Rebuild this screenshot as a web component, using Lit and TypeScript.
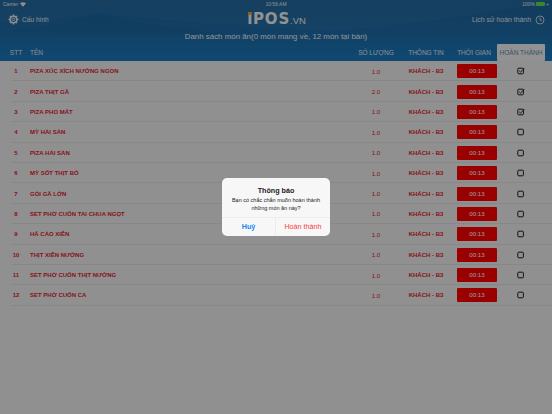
import { LitElement, css, html, svg } from "lit";
import { customElement, state } from "lit/decorators.js";

type Dish = { name: string; qty: string; done: boolean };

const dishes: Dish[] = [
    { name: "PIZA XÚC XÍCH NƯỚNG NGON", qty: "1.0", done: true },
    { name: "PIZA THỊT GÀ", qty: "2.0", done: true },
    { name: "PIZA PHO MÁT", qty: "1.0", done: true },
    { name: "MỲ HẢI SẢN", qty: "1.0", done: false },
    { name: "PIZA HẢI SẢN", qty: "1.0", done: false },
    { name: "MỲ SỐT THỊT BÒ", qty: "1.0", done: false },
    { name: "GỎI GÀ LỚN", qty: "1.0", done: false },
    { name: "SET PHỞ CUỐN TAI CHUA NGỌT", qty: "1.0", done: false },
    { name: "HÁ CẢO XIÊN", qty: "1.0", done: false },
    { name: "THỊT XIÊN NƯỚNG", qty: "1.0", done: false },
    { name: "SET PHỞ CUỐN THỊT NƯỚNG", qty: "1.0", done: false },
    { name: "SET PHỞ CUỐN CA", qty: "1.0", done: false },
];

@customElement("app-root")
export default class AppRoot extends LitElement {
    @state()
    private items: Dish[] = dishes;

    static styles = css`
        :host {
            display: block;
            width: 552px;
            height: 414px;
            position: relative;
            overflow: hidden;
            background: #f0f0f0;
            font-family: "Liberation Sans", Arial, sans-serif;
        }

        .header {
            position: relative;
            height: 61px;
            background: linear-gradient(180deg, #20649a 0%, #1e6ba6 50%, #1a7ac0 100%);
            color: #fff;
            overflow: hidden;
        }

        .waves {
            position: absolute;
            inset: 0;
        }

        .status,
        .topbar,
        .title,
        .columns {
            position: relative;
        }

        .status {
            display: grid;
            grid-template-columns: 1fr auto 1fr;
            align-items: center;
            height: 8px;
            padding: 0 3px;
            font-size: 5px;
            color: #e8eef4;
        }

        .status .left {
            display: flex;
            align-items: center;
            gap: 2px;
        }

        .status .right {
            display: flex;
            align-items: center;
            justify-content: flex-end;
            gap: 1px;
        }

        .battery {
            width: 9px;
            height: 4px;
            background: #5fe04c;
            border-radius: 1px;
        }

        .topbar {
            display: grid;
            grid-template-columns: 1fr auto 1fr;
            align-items: center;
            height: 21px;
            padding: 0 7px 0 8px;
            font-size: 6.9px;
            color: #e4ebf1;
        }

        .config {
            display: flex;
            align-items: center;
            gap: 3px;
            font-size: 6.6px;
        }

        .history {
            display: flex;
            align-items: center;
            justify-content: flex-end;
            gap: 4px;
        }

        .logo {
            position: relative;
            font-family: "DejaVu Sans", sans-serif;
            font-size: 15px;
            line-height: 21px;
            font-weight: 700;
            letter-spacing: 0.8px;
            color: #f4f4f4;
            padding-top: 1px;
        }

        .logo .dot {
            position: absolute;
            left: 1px;
            top: 4px;
            width: 4px;
            height: 3px;
            background: #f0a030;
        }

        .logo .vn {
            font-family: "Liberation Sans", sans-serif;
            font-size: 9.5px;
            font-weight: 400;
            letter-spacing: 0;
        }

        .title {
            height: 13px;
            margin-top: 1px;
            line-height: 13px;
            text-align: center;
            font-size: 7.9px;
            color: #eef2f6;
        }

        .grid {
            display: grid;
            grid-template-columns: 30px 1fr 50px 50px 46px 48px;
            align-items: center;
            padding-right: 7px;
        }

        .columns {
            height: 18px;
            font-size: 6.5px;
            color: #e4ebf1;
            text-align: center;
        }

        .columns .stt {
            margin-left: 2px;
        }

        .columns .name {
            text-align: left;
        }

        .columns .active {
            height: 17px;
            line-height: 17px;
            margin-top: 1px;
            background: #f4f4f4;
            border-radius: 1px;
            color: #5d8cae;
            white-space: nowrap;
        }

        .row {
            position: relative;
            height: 20.4px;
            font-size: 6px;
            font-weight: 700;
            color: #e2202c;
            text-align: center;
        }

        .row::after {
            content: "";
            position: absolute;
            left: 12px;
            right: 0;
            bottom: 0;
            height: 1px;
            background: #e2e2e2;
        }

        .row .name {
            text-align: left;
            white-space: nowrap;
        }

        .row .stt {
            margin-left: 2px;
            font-weight: 700;
        }

        .row .qty {
            font-weight: 400;
            font-size: 6.2px;
        }

        .time {
            justify-self: end;
            width: 40px;
            height: 14px;
            line-height: 14px;
            background: #ff0000;
            border-radius: 1px;
            color: #fff;
            font-weight: 400;
            font-size: 6.2px;
        }

        .check {
            display: flex;
            justify-content: center;
        }

        .scrim {
            position: absolute;
            inset: 0;
            z-index: 10;
            background: rgba(0, 0, 0, 0.4);
        }

        .alert {
            position: absolute;
            z-index: 11;
            left: 222px;
            top: 178px;
            width: 108px;
            height: 58px;
            background: #f7f7f7;
            border-radius: 5px;
            overflow: hidden;
            display: flex;
            flex-direction: column;
            text-align: center;
            color: #222;
        }

        .alert-body {
            flex: 1;
            padding-top: 8px;
        }

        .alert h2 {
            margin: 0 0 1px;
            font-size: 7.2px;
            line-height: 9px;
            font-weight: 700;
        }

        .alert p {
            margin: 0;
            font-size: 5.5px;
            line-height: 8px;
        }

        .actions {
            display: grid;
            grid-template-columns: 1fr 1fr;
            height: 18px;
            border-top: 1px solid #ececec;
            font-size: 7.2px;
            line-height: 17px;
        }

        .cancel {
            color: #1685f5;
            font-weight: 700;
            border-right: 1px solid #ececec;
        }

        .ok {
            color: #f9403e;
        }
    `;

    private renderCheck(done: boolean) {
        return html`<svg width="8" height="8" viewBox="0 0 8 8" fill="none" stroke="#1c1c1c" stroke-width="1">
            <rect x="0.8" y="1.2" width="5.6" height="5.6" rx="0.9"></rect>
            ${done ? svg`<path d="M2.2 3.8 L3.6 5.2 L7.4 1" stroke-width="0.9"></path>` : ""}
        </svg>`;
    }

    private renderRow(item: Dish, index: number) {
        return html`<div class="row grid">
            <div class="stt">${index + 1}</div>
            <div class="name">${item.name}</div>
            <div class="qty">${item.qty}</div>
            <div class="info">KHÁCH - B3</div>
            <div class="time">00:13</div>
            <div class="check">${this.renderCheck(item.done)}</div>
        </div>`;
    }

    render() {
        return html`
            <div class="header">
                <svg class="waves" width="552" height="61" viewBox="0 0 552 61">
                    <path d="M0 22 C40 22 70 18 100 13 C150 20 230 25 330 31 C420 24 500 12 552 0 L0 0 Z" fill="#3b83b6" opacity="0.2"></path>
                    <path d="M0 31 C40 30 70 22 100 13 C140 24 180 30 240 34 C160 36 60 36 0 31 Z" fill="#16639c" opacity="0.35"></path>
                </svg>
                <div class="status">
                    <div class="left">
                        Carrier
                        <svg width="6" height="5" viewBox="0 0 12 9"><path d="M6 9 L0 2.6 C3.4 -0.8 8.6 -0.8 12 2.6 Z" fill="#e8eef4"></path></svg>
                    </div>
                    <div>10:56 AM</div>
                    <div class="right">100% <span class="battery"></span> +</div>
                </div>
                <div class="topbar">
                    <div class="config">
                        <svg width="11" height="11" viewBox="0 0 20 20" fill="none" stroke="#e4ebf1">
                            <circle cx="10" cy="10" r="6" stroke-width="2.8"></circle>
                            <circle cx="10" cy="10" r="2.2" stroke-width="1.6"></circle>
                            <path d="M10 1 V4 M10 16 V19 M1 10 H4 M16 10 H19 M3.6 3.6 L5.8 5.8 M14.2 14.2 L16.4 16.4 M3.6 16.4 L5.8 14.2 M14.2 5.8 L16.4 3.6" stroke-width="2.8"></path>
                        </svg>
                        Cấu hình
                    </div>
                    <div class="logo"><span class="dot"></span>ıPOS<span class="vn">.VN</span></div>
                    <div class="history">
                        Lịch sử hoàn thành
                        <svg width="10" height="10" viewBox="0 0 20 20" fill="none" stroke="#e4ebf1" stroke-width="1.6">
                            <circle cx="10" cy="10" r="8"></circle>
                            <path d="M10 5 V10.5 H14"></path>
                        </svg>
                    </div>
                </div>
                <div class="title">Danh sách món ăn(0 món mang về, 12 món tại bàn)</div>
                <div class="columns grid">
                    <div class="stt">STT</div>
                    <div class="name">TÊN</div>
                    <div>SỐ LƯỢNG</div>
                    <div>THÔNG TIN</div>
                    <div>THỜI GIAN</div>
                    <div class="active">HOÀN THÀNH</div>
                </div>
            </div>
            <div class="list">${this.items.map((item, i) => this.renderRow(item, i))}</div>
            <div class="scrim"></div>
            <div class="alert">
                <div class="alert-body">
                    <h2>Thông báo</h2>
                    <p>Bạn có chắc chắn muốn hoàn thành<br />những món ăn này?</p>
                </div>
                <div class="actions">
                    <div class="cancel">Huỷ</div>
                    <div class="ok">Hoàn thành</div>
                </div>
            </div>
        `;
    }
}
